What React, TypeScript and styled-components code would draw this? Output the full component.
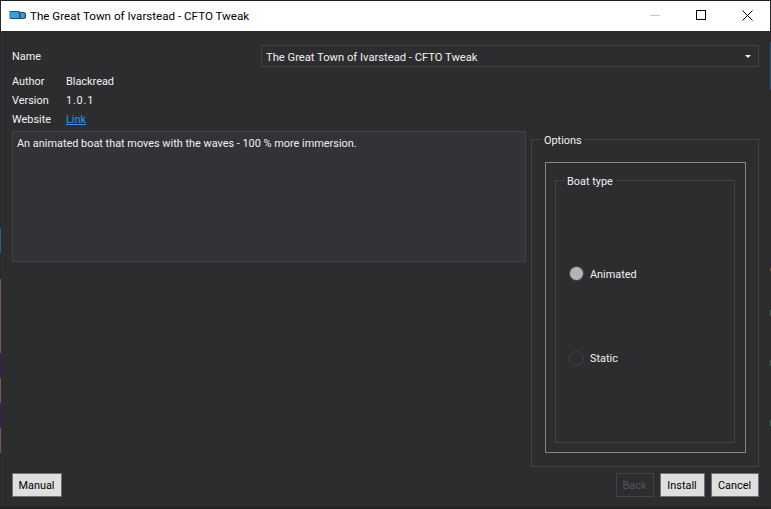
import React from 'react';
import styled, { createGlobalStyle } from 'styled-components';

const GlobalStyle = createGlobalStyle`
  html, body {
    margin: 0;
    padding: 0;
    background: #2d2d30;
  }
  * {
    box-sizing: border-box;
  }
`;

const Page = styled.div`
  width: 771px;
  height: 509px;
  display: flex;
  overflow: hidden;
`;

// 1px slivers of the desktop showing past the window edge
const LeftEdge = styled.div`
  width: 1px;
  flex: none;
  background: linear-gradient(
    #2a2a2c 0 228px,
    #2a5a8a 228px 253px,
    #2a2a2c 253px 279px,
    #7a5a48 279px 353px,
    #3c1f5a 353px 378px,
    #7a5a48 378px 403px,
    #3c1f5a 403px 428px,
    #7a5a48 428px 453px,
    #2a2a2c 453px
  );
`;

const RightEdge = styled.div`
  width: 1px;
  flex: none;
  background: linear-gradient(
    #2a2a2c 0 42px,
    #2f4f70 42px 90px,
    #2a2a2c 90px 268px,
    #6a5548 268px 271px,
    #2a2a2c 271px 310px,
    #3d5a50 310px 316px,
    #2a2a2c 316px 360px,
    #3d5a50 360px 366px,
    #2a2a2c 366px 420px,
    #3d5a50 420px 426px,
    #2a2a2c 426px
  );
`;

const Window = styled.div`
  flex: 1;
  min-width: 0;
  display: flex;
  flex-direction: column;
  background: #2d2d30;
  border-top: 1px solid #1f1f21;
  border-bottom: 2px solid #232325;
  font-family: Roboto, 'Open Sans', sans-serif;
  font-size: 10.9px;
  color: #f1f1f1;
`;

const TitleBar = styled.div`
  height: 30px;
  flex: none;
  display: flex;
  align-items: center;
  background: #fff;
  color: #000;
  font-size: 11.6px;
  padding-left: 8px;
`;

const TitleText = styled.span`
  margin-left: 4px;
  flex: 1;
`;

const CaptionButton = styled.div`
  width: 46px;
  height: 30px;
  padding-bottom: 2px;
  display: flex;
  align-items: center;
  justify-content: center;
`;

const Content = styled.div`
  flex: 1;
  display: flex;
  flex-direction: column;
  padding: 14px 11px 10px 11px;
  min-height: 0;
`;

const NameRow = styled.div`
  display: flex;
  align-items: center;
  height: 22px;
  justify-content: space-between;
`;

const Select = styled.div`
  width: 498px;
  height: 22px;
  display: flex;
  align-items: center;
  justify-content: space-between;
  padding: 2px 7px 0 4px;
  border: 1px solid #434346;
  background: #2d2d30;
  font-size: 11.2px;
`;

const Caret = styled.span`
  width: 0;
  height: 0;
  margin-top: -2px;
  border-left: 3.5px solid transparent;
  border-right: 3.5px solid transparent;
  border-top: 3.5px solid #f1f1f1;
`;

const MetaList = styled.div`
  display: grid;
  grid-template-columns: 54px auto;
  grid-auto-rows: 19px;
  justify-content: start;
  align-items: center;
  margin-top: 5px;
`;

const VersionValue = styled.span`
  letter-spacing: 0.8px;
`;

const LinkText = styled.a`
  color: #3391ff;
  text-decoration: underline;
`;

const Main = styled.div`
  flex: 1;
  display: flex;
  justify-content: space-between;
  margin-top: 2px;
  min-height: 0;
`;

const Description = styled.div`
  width: 514px;
  height: 131px;
  background: #333337;
  border: 1px solid #434346;
  padding: 5px 4px;
`;

const GroupBox = styled.fieldset`
  margin: 0;
  min-width: 0;
  display: flex;
  border: 1px solid #434346;
`;

const OptionsGroup = styled(GroupBox)`
  width: 228px;
  padding: 14px 12px 13px 13px;
`;

const BoatGroup = styled(GroupBox)`
  flex: 1;
  padding: 8px 0 7px;
  flex-direction: column;
  justify-content: space-evenly;
`;

const Legend = styled.legend<{ $offset: number }>`
  padding: 2px 3px 0;
  margin-left: ${(p) => p.$offset}px;
  line-height: 15px;
`;

const InnerFrame = styled.div`
  flex: 1;
  display: flex;
  border: 1px solid #87878b;
  padding: 9px 10px 9px 9px;
`;

const RadioRow = styled.div`
  display: flex;
  align-items: center;
  gap: 6px;
  padding-left: 13px;
`;

const RadioMark = styled.span<{ $checked?: boolean }>`
  width: 15px;
  height: 15px;
  border-radius: 50%;
  border: 1px solid #434346;
  background: ${(p) => (p.$checked ? '#b4b4b6' : 'transparent')};
`;

const RadioLabel = styled.span`
  padding-top: 1px;
`;

const Footer = styled.div`
  display: flex;
  align-items: center;
  height: 24px;
  margin-top: 6px;
  gap: 6px;
`;

const Spacer = styled.div`
  flex: 1;
`;

const Button = styled.button<{ $width: number }>`
  width: ${(p) => p.$width}px;
  height: 24px;
  padding: 0 1px 0 0;
  font: inherit;
  color: #000;
  background: #dfdfdf;
  border: 1px solid #707070;

  &:disabled {
    color: #555558;
    background: transparent;
    border-color: #434346;
  }
`;

export default function App() {
  return (
    <Page>
      <GlobalStyle />
      <LeftEdge />
      <Window>
        <TitleBar>
          <svg width="17" height="16" viewBox="0 0 17 16">
            <path d="M0.5 3h9.5l1 1h3.5a2.5 2.5 0 0 1 2.5 2.5v2a2.5 2.5 0 0 1-2.5 2.5H2a1.5 1.5 0 0 1-1.5-1.5z" fill="#3b4650" />
            <path d="M1 4h8.2l0.8 1.5V10H2.2A1.2 1.2 0 0 1 1 8.8z" fill="#2aa4e4" />
            <path d="M11.5 5h2.5a1.8 1.8 0 0 1 1.8 1.8v1.4A1.8 1.8 0 0 1 14 10h-2.5z" fill="#2aa4e4" />
          </svg>
          <TitleText>The Great Town of Ivarstead - CFTO Tweak</TitleText>
          <CaptionButton>
            <svg width="10" height="10" viewBox="0 0 10 10">
              <path d="M0 5.5h10" stroke="#c8c8c8" />
            </svg>
          </CaptionButton>
          <CaptionButton>
            <svg width="10" height="10" viewBox="0 0 10 10">
              <rect x="0.5" y="0.5" width="9" height="9" fill="none" stroke="#000" />
            </svg>
          </CaptionButton>
          <CaptionButton>
            <svg width="11" height="11" viewBox="0 0 11 11">
              <path d="M0.5 0.5l10 10M10.5 0.5l-10 10" stroke="#000" />
            </svg>
          </CaptionButton>
        </TitleBar>
        <Content>
          <NameRow>
            <span>Name</span>
            <Select>
              <span>The Great Town of Ivarstead - CFTO Tweak</span>
              <Caret />
            </Select>
          </NameRow>
          <MetaList>
            <span>Author</span>
            <span>Blackread</span>
            <span>Version</span>
            <VersionValue>1.0.1</VersionValue>
            <span>Website</span>
            <LinkText href="#">Link</LinkText>
          </MetaList>
          <Main>
            <Description>An animated boat that moves with the waves - 100 % more immersion.</Description>
            <OptionsGroup>
              <Legend $offset={-4}>Options</Legend>
              <InnerFrame>
                <BoatGroup>
                  <Legend $offset={8}>Boat type</Legend>
                  <RadioRow>
                    <RadioMark $checked />
                    <RadioLabel>Animated</RadioLabel>
                  </RadioRow>
                  <RadioRow>
                    <RadioMark />
                    <RadioLabel>Static</RadioLabel>
                  </RadioRow>
                </BoatGroup>
              </InnerFrame>
            </OptionsGroup>
          </Main>
          <Footer>
            <Button $width={50}>Manual</Button>
            <Spacer />
            <Button $width={38} disabled>
              Back
            </Button>
            <Button $width={45}>Install</Button>
            <Button $width={48}>Cancel</Button>
          </Footer>
        </Content>
      </Window>
      <RightEdge />
    </Page>
  );
}
